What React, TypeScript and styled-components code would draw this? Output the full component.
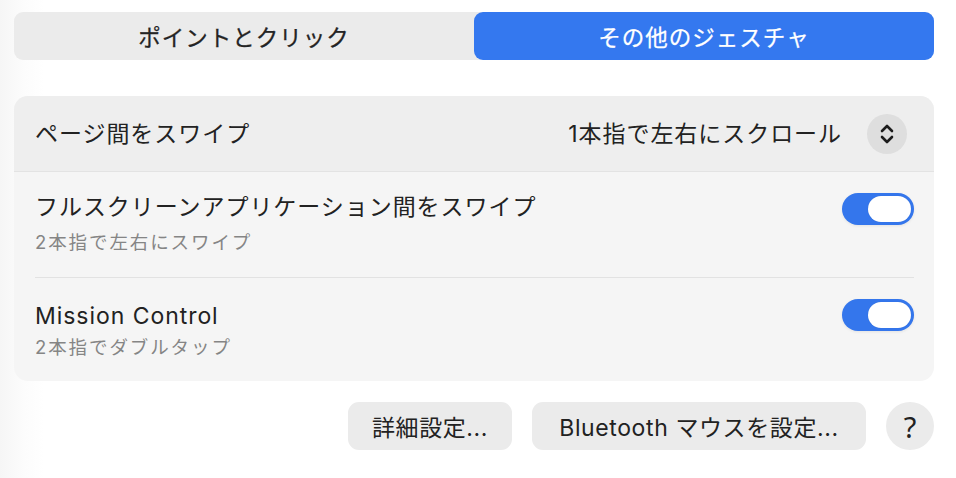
import React from "react";
import styled, { createGlobalStyle } from "styled-components";

const Global = createGlobalStyle`
  html, body { margin: 0; padding: 0; }
  body {
    background: linear-gradient(to right, #f6f6f6 0px, #fcfcfc 24px, #ffffff 44px);
    font-family: Inter, "Noto Sans CJK JP", sans-serif;
    color: #222;
    width: 956px;
    height: 478px;
    overflow: hidden;
  }
`;

const Page = styled.div`
  padding: 12px 22px 0 14px;
  display: flex;
  flex-direction: column;
`;

const Tabs = styled.div`
  display: grid;
  grid-template-columns: 1fr 1fr;
  height: 48px;
  background: #ebebeb;
  border-radius: 9px;
`;

const Tab = styled.div<{ $active?: boolean }>`
  display: flex;
  align-items: center;
  justify-content: center;
  border-radius: 9px;
  font-size: 22.5px;
  font-weight: 400;
  letter-spacing: 1px;
  -webkit-text-stroke: 0.25px currentColor;
  background: ${(p) => (p.$active ? "#3478ef" : "transparent")};
  color: ${(p) => (p.$active ? "#ffffff" : "#242424")};
`;

const Panel = styled.div`
  margin-top: 36px;
  border-radius: 14px;
  background: #f5f5f5;
  overflow: hidden;
  display: flex;
  flex-direction: column;
`;

const HeaderRow = styled.div`
  height: 76px;
  box-sizing: border-box;
  background: #eeeeee;
  border-bottom: 1px solid #e3e3e3;
  display: flex;
  align-items: center;
  justify-content: space-between;
  padding: 0 27px 0 21px;
`;

const Label = styled.div`
  font-size: 23px;
  line-height: 32px;
  letter-spacing: 0.95px;
  color: #222;
`;

const SelectWrap = styled.div`
  display: flex;
  align-items: center;
  gap: 25px;
`;

const Stepper = styled.div`
  width: 40px;
  height: 40px;
  border-radius: 50%;
  background: #dedede;
  display: flex;
  align-items: center;
  justify-content: center;
`;

const Row = styled.div<{ $h: number; $top: number }>`
  height: ${(p) => p.$h}px;
  box-sizing: border-box;
  display: flex;
  align-items: flex-start;
  justify-content: space-between;
  padding: ${(p) => p.$top}px 20px 0 21px;
`;

const TextCol = styled.div<{ $gap: number }>`
  display: flex;
  flex-direction: column;
  gap: ${(p) => p.$gap}px;
`;

const Sub = styled.div`
  font-size: 18.5px;
  line-height: 26px;
  letter-spacing: 1.9px;
  color: #858585;
`;

const Divider = styled.div`
  height: 1px;
  background: #e2e2e2;
  margin: 0 20px 0 21px;
`;

const Toggle = styled.div<{ $top: number }>`
  margin-top: ${(p) => p.$top}px;
  width: 72px;
  height: 32px;
  border-radius: 16px;
  background: #3476ec;
  box-sizing: border-box;
  padding: 3px;
  display: flex;
  justify-content: flex-end;
  box-shadow: 0 1px 3px rgba(0, 0, 0, 0.08);
`;

const Knob = styled.div`
  width: 43px;
  height: 26px;
  border-radius: 13px;
  background: #ffffff;
  box-shadow: 0 0 1px rgba(0, 0, 0, 0.15);
`;

const Footer = styled.div`
  margin-top: 21px;
  display: flex;
  justify-content: flex-end;
  align-items: center;
  gap: 20px;
`;

const Button = styled.div<{ $w: number }>`
  width: ${(p) => p.$w}px;
  height: 48px;
  border-radius: 11px;
  background: #ebebeb;
  display: flex;
  align-items: center;
  justify-content: center;
  font-size: 23px;
  letter-spacing: 0.6px;
  color: #222;
`;

const Help = styled.div`
  width: 48px;
  height: 48px;
  border-radius: 50%;
  background: #ebebeb;
  display: flex;
  align-items: center;
  justify-content: center;
  font-family: "Noto Sans", sans-serif;
  font-size: 29px;
  font-weight: 400;
  color: #222;
`;

const Chevrons = () => (
  <svg width="16" height="22" viewBox="0 0 16 22">
    <path d="M3 8 L8 3 L13 8" fill="none" stroke="#1c1c1c" strokeWidth="2.6" strokeLinecap="round" strokeLinejoin="round" />
    <path d="M3 14 L8 19 L13 14" fill="none" stroke="#1c1c1c" strokeWidth="2.6" strokeLinecap="round" strokeLinejoin="round" />
  </svg>
);

export default function App() {
  return (
    <>
      <Global />
      <Page>
        <Tabs>
          <Tab>ポイントとクリック</Tab>
          <Tab $active>その他のジェスチャ</Tab>
        </Tabs>
        <Panel>
          <HeaderRow>
            <Label>ページ間をスワイプ</Label>
            <SelectWrap>
              <Label>1本指で左右にスクロール</Label>
              <Stepper>
                <Chevrons />
              </Stepper>
            </SelectWrap>
          </HeaderRow>
          <Row $h={105} $top={19}>
            <TextCol $gap={6}>
              <Label>フルスクリーンアプリケーション間をスワイプ</Label>
              <Sub>2本指で左右にスワイプ</Sub>
            </TextCol>
            <Toggle $top={2}>
              <Knob />
            </Toggle>
          </Row>
          <Divider />
          <Row $h={103} $top={22}>
            <TextCol $gap={2}>
              <Label>Mission Control</Label>
              <Sub>2本指でダブルタップ</Sub>
            </TextCol>
            <Toggle $top={-1}>
              <Knob />
            </Toggle>
          </Row>
        </Panel>
        <Footer>
          <Button $w={164}>詳細設定...</Button>
          <Button $w={334}>Bluetooth マウスを設定...</Button>
          <Help>?</Help>
        </Footer>
      </Page>
    </>
  );
}
